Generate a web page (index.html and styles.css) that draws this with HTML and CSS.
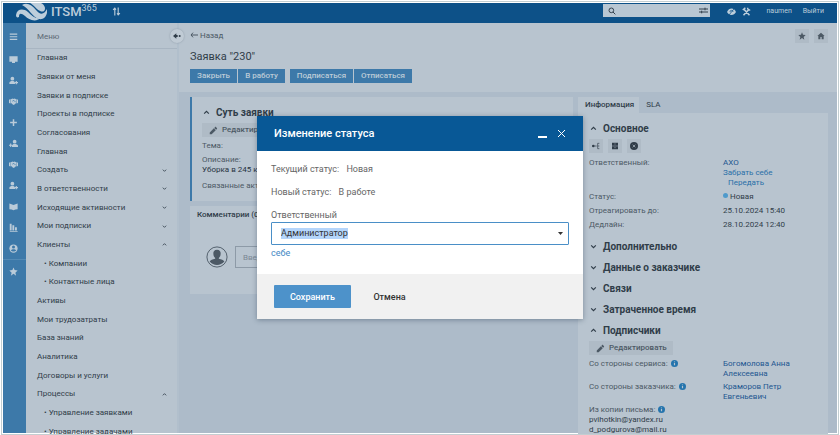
FILE: index.html
```html
<!DOCTYPE html>
<html lang="ru">
<head>
    <meta charset="UTF-8">
    <meta name="viewport" content="width=device-width, initial-scale=1.0">
    <link rel="stylesheet" href="styles.css">
    <title>Заявка "230"</title>
</head>
<body>
    <svg class="sprite" aria-hidden="true">
        <symbol id="user-plus" viewBox="0 0 24 24"><circle cx="9" cy="7" r="5"/><path d="M1 21v-3c0-4 4-5 8-5s7 1 7 5v3zM18 13h3v3h3v3h-3v3h-3v-3h-2v-3h2z"/></symbol>
        <symbol id="plus-user" viewBox="0 0 24 24"><circle cx="15" cy="7" r="5"/><path d="M8 21v-3c0-4 3-5 7-5s9 1 9 5v3zM3 12h3v3h2v3H6v3H3v-3H0v-3h3z"/></symbol>
        <symbol id="hands" viewBox="0 0 24 24"><path d="M0 7l4-2v12l-4-1zM24 7l-4-2v12l4-1zM5 6l5-2 2 1 3-1 4 2v10l-6 5-3-1-5-5z"/><path d="M9 11l4-2 5 5" fill="none" stroke="#3d79a9" stroke-width="2"/></symbol>
        <symbol id="star" viewBox="0 0 24 24"><path d="M12 18l7 5-2-8 6-6-8-1-3-7-3 7-8 1 6 6-2 8z"/></symbol>
        <symbol id="up" viewBox="0 0 24 24"><path d="M4 16l8-8 8 8" fill="none" stroke="currentColor" stroke-width="4"/></symbol>
        <symbol id="down" viewBox="0 0 24 24"><path d="M4 8l8 8 8-8" fill="none" stroke="currentColor" stroke-width="4"/></symbol>
        <symbol id="pencil" viewBox="0 0 24 24"><path d="M2 17v5h5L18 11l-5-5zM21 8c1-1 1-2 0-3L19 3c-1-1-2-1-3 0L14 5l5 5z"/></symbol>
        <symbol id="info" viewBox="0 0 24 24"><circle cx="12" cy="12" r="12"/><path d="M10 10h4v8h-4zM10 5h4v3h-4z" fill="#b8c4cf"/></symbol>
    </svg>

    <div class="frame">
        <header class="topbar">
            <svg class="logo" viewBox="0 0 31 18">
                <path d="M0 12C1 6 7 5 12 9c5 5 9 8 14 5-6 6-13 3-17-1-4-3-6-3-6 1-2 1-3 0-3-2z"/>
                <path d="M6 2C11-1 16 2 20 7c4 5 8 5 11-1 1 6-3 11-8 10C16 14 13 5 6 2z"/>
                <path d="M14 0h11c4 2 5 6 3 8-3 2-7-2-9-4-2-2-3-3-5-4z"/>
            </svg>
            <span class="brand">ITSM<sup>365</sup></span>
            <svg class="sort" viewBox="0 0 16 16"><path d="M5 15V3M2 5l3-3 2 3M11 1v12M9 11l2 3 3-3" fill="none" stroke="currentColor" stroke-width="2"/></svg>
            <label class="search">
                <svg viewBox="0 0 24 24"><path d="M15 15l7 7" stroke="currentColor" stroke-width="3"/><circle cx="10" cy="10" r="7" fill="none" stroke="currentColor" stroke-width="3"/></svg>
                <input type="search" aria-label="Поиск">
                <svg class="tune" viewBox="0 0 27 21"><path d="M0 6h27M0 15h27M18 2v8M8 11v8" stroke="currentColor" stroke-width="3"/></svg>
            </label>
            <svg class="tool" viewBox="0 0 24 24"><path d="M0 13C3 7 7 4 12 4s9 3 12 9c-3 5-7 8-12 8S3 18 0 13z"/><path d="M4 23L21 2M8 13a4 4 0 0 1 8 0" fill="none" stroke="#0d5188" stroke-width="2"/></svg>
            <svg class="tool" viewBox="0 0 24 24"><path d="M4 22L18 7M20 22L6 7M2 8l7-6M15 2c0 4 2 7 7 6" fill="none" stroke="currentColor" stroke-width="4"/></svg>
            <a class="user" href="#">naumen</a>
            <a class="exit" href="#">Выйти</a>
        </header>

        <div class="shell">
            <nav class="rail" aria-label="Разделы">
                <a href="#" aria-label="Меню"><svg viewBox="0 0 24 24"><path d="M2 4h20v3H2zM2 11h20v3H2zM2 18h20v3H2z"/></svg></a>
                <a href="#" aria-label="Главная"><svg viewBox="0 0 24 24"><path d="M1 3h22v15h-7v3H8v-3H1z"/></svg></a>
                <a href="#" aria-label="Заявки"><svg><use href="#user-plus"/></svg></a>
                <a href="#" aria-label="Партнёры"><svg><use href="#hands"/></svg></a>
                <a href="#" aria-label="Создать"><svg viewBox="0 0 24 24"><path d="M10 3h4v7h7v4h-7v7h-4v-7H3v-4h7z"/></svg></a>
                <a href="#" aria-label="Добавить"><svg><use href="#plus-user"/></svg></a>
                <a href="#" aria-label="Договоры"><svg><use href="#hands"/></svg></a>
                <a href="#" aria-label="Клиенты"><svg><use href="#user-plus"/></svg></a>
                <a href="#" aria-label="База знаний"><svg viewBox="0 0 24 24"><path d="M1 4l4 1 7 3 7-3 4-1v15l-6 1-5 2-5-2-6-1z"/></svg></a>
                <a href="#" aria-label="Аналитика"><svg viewBox="0 0 24 24"><path d="M2 2h5v18H2zM9 6h5v14H9zM16 11h5v9h-5zM2 21h21v2H2z"/></svg></a>
                <a href="#" aria-label="Профиль"><svg viewBox="0 0 24 24"><circle cx="12" cy="12" r="11"/><circle cx="12" cy="8" r="4" fill="#3d79a9"/><path d="M5 17c2-4 12-4 14 0-3 4-11 4-14 0z" fill="#3d79a9"/></svg></a>
                <a class="fav" href="#" aria-label="Избранное"><svg><use href="#star"/></svg></a>
            </nav>

            <aside class="menu">
                <div class="menu-title">Меню</div>
                <ul>
                    <li><a href="#">Главная</a></li>
                    <li><a href="#">Заявки от меня</a></li>
                    <li><a href="#">Заявки в подписке</a></li>
                    <li><a href="#">Проекты в подписке</a></li>
                    <li><a href="#">Согласования</a></li>
                    <li><a href="#">Главная</a></li>
                    <li><a href="#">Создать</a><svg><use href="#down"/></svg></li>
                    <li><a href="#">В ответственности</a><svg><use href="#down"/></svg></li>
                    <li><a href="#">Исходящие активности</a><svg><use href="#down"/></svg></li>
                    <li><a href="#">Мои подписки</a><svg><use href="#down"/></svg></li>
                    <li><a href="#">Клиенты</a><svg><use href="#up"/></svg></li>
                    <li class="sub"><a href="#">• Компании</a></li>
                    <li class="sub"><a href="#">• Контактные лица</a></li>
                    <li><a href="#">Активы</a></li>
                    <li><a href="#">Мои трудозатраты</a></li>
                    <li><a href="#">База знаний</a></li>
                    <li><a href="#">Аналитика</a></li>
                    <li><a href="#">Договоры и услуги</a></li>
                    <li><a href="#">Процессы</a><svg><use href="#up"/></svg></li>
                    <li class="sub"><a href="#">• Управление заявками</a></li>
                    <li class="sub"><a href="#">• Управление задачами</a></li>
                </ul>
                <button class="collapse" aria-label="Свернуть меню"><svg viewBox="0 0 24 16"><path d="M0 8l10-8v5h4v6h-4v5z"/><circle cx="20" cy="8" r="3"/></svg></button>
            </aside>

            <main>
                <div class="page-head">
                    <div class="crumbs">
                        <a href="#"><svg viewBox="0 0 24 18"><path d="M24 9H3M9 2L3 9l6 7" fill="none" stroke="currentColor" stroke-width="3"/></svg>Назад</a>
                        <span>
                            <button class="square" aria-label="В избранное"><svg><use href="#star"/></svg></button>
                            <button class="square" aria-label="Домой"><svg viewBox="0 0 24 24"><path d="M12 2l11 10h-3v10h-6v-7h-4v7H4V12H1z"/></svg></button>
                        </span>
                    </div>
                    <h1>Заявка "230"</h1>
                    <div class="actions">
                        <div class="group"><button class="w-close">Закрыть</button><button class="w-close">В работу</button></div>
                        <div class="group"><button class="w-sub">Подписаться</button><button class="w-unsub">Отписаться</button></div>
                    </div>
                </div>

                <div class="columns">
                    <div class="left">
                        <section class="card essence">
                            <h2><svg><use href="#up"/></svg>Суть заявки</h2>
                            <button class="edit"><svg><use href="#pencil"/></svg>Редактировать</button>
                            <p>Тема:</p>
                            <p>Описание:<br><b>Уборка в 245 каб</b></p>
                            <p>Связанные акты</p>
                        </section>
                        <section class="card comments">
                            <h3>Комментарии (0)</h3>
                            <div class="reply">
                                <svg viewBox="0 0 24 24"><circle cx="12" cy="12" r="11" fill="none" stroke="currentColor" stroke-width="1"/><path d="M12 4c3 0 4 2 4 4 0 3-1 4-2 5v1c3 1 5 1 6 3-4 5-12 5-16 0 1-2 3-2 6-3v-1c-1-1-2-2-2-5 0-2 1-4 4-4z"/></svg>
                                <input type="text" placeholder="Введите" aria-label="Комментарий">
                            </div>
                        </section>
                    </div>

                    <div class="right">
                        <div class="tabs"><button class="active">Информация</button><button>SLA</button></div>
                        <section class="panel">
                            <h2><svg><use href="#up"/></svg>Основное</h2>
                            <div class="icons">
                                <button class="square" aria-label="Связи"><svg viewBox="0 0 24 24"><circle cx="4" cy="12" r="4"/><path d="M8 12h6M22 4h-5v16h5M17 12h5" fill="none" stroke="currentColor" stroke-width="2"/></svg></button>
                                <button class="square" aria-label="Архив"><svg viewBox="0 0 24 24"><path d="M3 2h18v9H3zM3 13h18v9H3z"/><path d="M9 6h6M9 17h6" stroke="#b8c4cf" stroke-width="1"/></svg></button>
                                <button class="square" aria-label="Закрыть"><svg viewBox="0 0 24 24"><circle cx="12" cy="12" r="12"/><path d="M8 8l8 8M16 8l-8 8" stroke="#b8c4cf" stroke-width="2"/></svg></button>
                            </div>
                            <dl>
                                <dt>Ответственный:</dt>
                                <dd class="links"><a class="dark" href="#">АХО</a><a href="#">Забрать себе</a><a class="pass" href="#">Передать</a></dd>
                                <dt>Статус:</dt><dd><i class="dot"></i>Новая</dd>
                                <dt>Отреагировать до:</dt><dd>25.10.2024 15:40</dd>
                                <dt>Дедлайн:</dt><dd>28.10.2024 12:40</dd>
                            </dl>
                            <h2><svg><use href="#down"/></svg>Дополнительно</h2>
                            <h2><svg><use href="#down"/></svg>Данные о заказчике</h2>
                            <h2><svg><use href="#down"/></svg>Связи</h2>
                            <h2><svg><use href="#down"/></svg>Затраченное время</h2>
                            <h2><svg><use href="#up"/></svg>Подписчики</h2>
                            <button class="edit"><svg><use href="#pencil"/></svg>Редактировать</button>
                            <dl class="followers">
                                <dt>Со стороны сервиса: <svg><use href="#info"/></svg></dt><dd><a class="dark" href="#">Богомолова Анна Алексеевна</a></dd>
                                <dt>Со стороны заказчика: <svg><use href="#info"/></svg></dt><dd><a class="dark" href="#">Краморов Петр Евгеньевич</a></dd>
                                <dt>Из копии письма: <svg><use href="#info"/></svg><span>pvihotkin@yandex.ru<br>d_podgurova@mail.ru</span></dt>
                            </dl>
                        </section>
                    </div>
                </div>
            </main>
        </div>
    </div>

    <div class="overlay">
        <form class="modal" role="dialog" aria-labelledby="modal-title">
            <div class="modal-head">
                <h2 id="modal-title">Изменение статуса</h2>
                <button type="button" aria-label="Свернуть"><svg viewBox="0 0 10 10"><path d="M1 8h9" stroke="currentColor" stroke-width="2"/></svg></button>
                <button type="button" aria-label="Закрыть окно"><svg viewBox="0 0 10 10"><path d="M1 1l7 7M8 1L1 8" stroke="currentColor" stroke-width="1"/></svg></button>
            </div>
            <div class="modal-body">
                <p>Текущий статус: <span>Новая</span></p>
                <p>Новый статус: <span>В работе</span></p>
                <label for="responsible">Ответственный</label>
                <div class="combo">
                    <select id="responsible"><option>Администратор</option></select>
                    <svg viewBox="0 0 10 6"><path d="M0 0h10L5 6z"/></svg>
                </div>
                <a href="#">себе</a>
            </div>
            <div class="modal-foot">
                <button type="submit" class="save">Сохранить</button>
                <button type="button" class="cancel">Отмена</button>
            </div>
        </form>
    </div>
</body>
</html>
```
FILE: styles.css
```css
* {
    box-sizing: border-box;
}

body {
    margin: 0;
    background: #fff;
    color: #303d49;
    font: 8px/10px Roboto, sans-serif;
}

h1, h2, h3, p, ul, dl, dd {
    margin: 0;
    padding: 0;
}

a {
    color: inherit;
    text-decoration: none;
}

button, input, select {
    font: inherit;
    color: inherit;
    border: none;
    padding: 0;
    background: none;
}

button {
    cursor: pointer;
}

svg {
    fill: currentColor;
    flex: none;
}

.sprite {
    display: none;
}

.frame {
    display: flex;
    flex-direction: column;
    height: calc(100vh - 1px);
    margin: 1px 1px 0;
    border: 1px solid #c3ced1;
    padding: 1px;
    overflow: hidden;
}

/* Top bar */
.topbar {
    display: flex;
    align-items: center;
    flex: none;
    height: 20px;
    padding: 0 13px;
    background: #0d5188;
    color: #bdcedb;
}

.logo {
    width: 31px;
    height: 18px;
    align-self: flex-start;
}

.brand {
    margin-left: 4px;
    font-size: 13px;
    font-weight: 500;
    line-height: 17px;
    align-self: flex-start;
}

.brand sup {
    font-size: 9px;
    font-weight: 400;
    line-height: 8px;
}

.sort {
    width: 9px;
    height: 9px;
    margin: 0 auto 4px 15px;
}

.search {
    display: flex;
    align-items: center;
    width: 107px;
    height: 13px;
    margin: 0 17px 5px 0;
    padding: 0 2px 0 5px;
    background: #b9c7d3;
    color: #35424e;
}

.search svg {
    width: 8px;
    height: 8px;
}

.search input {
    flex: 1;
    min-width: 0;
    outline: none;
}

.search .tune {
    width: 9px;
    height: 7px;
}

.tool {
    width: 9px;
    height: 9px;
    margin: 0 6px 4px 0;
}

.user, .exit {
    margin-bottom: 4px;
    font-size: 7px;
}

.user {
    margin-left: 10px;
    margin-right: 11px;
}

/* Side navigation */
.shell {
    display: flex;
    flex: 1;
    min-height: 0;
}

.rail {
    width: 23px;
    flex: none;
    padding-top: 3px;
    background: #3d79a9;
    color: #bacbd9;
}

.rail a {
    display: flex;
    align-items: center;
    justify-content: center;
    height: 21px;
    padding-right: 3px;
}

.rail a:first-child {
    margin-bottom: 2px;
}

.rail svg {
    width: 9px;
    height: 9px;
}

.rail .fav {
    height: 24px;
    border-top: 1px solid #538ab5;
}

.menu {
    position: relative;
    width: 153px;
    flex: none;
    background: #b8c4cf;
    border-right: 2px solid #b1bfcc;
}

.menu-title {
    height: 26px;
    padding-left: 11px;
    border-bottom: 1px solid #a8b5c2;
    line-height: 28px;
    color: #5b6874;
}

.menu ul {
    display: grid;
    grid-auto-rows: 1fr;
    height: 392px;
    list-style: none;
}

.menu li {
    display: flex;
    align-items: center;
    justify-content: space-between;
    padding: 0 10px 0 11px;
}

.menu .sub {
    padding-left: 18px;
}

.menu li svg {
    width: 5px;
    height: 5px;
}

.collapse {
    position: absolute;
    top: 6px;
    right: -7px;
    display: flex;
    align-items: center;
    justify-content: center;
    width: 14px;
    height: 14px;
    border-radius: 50%;
    background: #c0cbd5;
    box-shadow: 0 0 2px #8d9aa7;
}

.collapse svg {
    width: 8px;
    height: 6px;
}

/* Ticket page */
main {
    display: flex;
    flex-direction: column;
    flex: 1;
    min-width: 0;
    background: #adbbc9;
}

.page-head {
    flex: none;
    height: 69px;
    padding: 6px 9px 0 11px;
    background: #b8c4cf;
}

.crumbs {
    display: flex;
    align-items: center;
    justify-content: space-between;
    color: #4c5965;
}

.crumbs > span {
    display: flex;
    gap: 5px;
}

.crumbs a svg {
    width: 8px;
    height: 6px;
    margin-right: 2px;
}

.square {
    display: flex;
    align-items: center;
    justify-content: center;
    width: 14px;
    height: 14px;
    background: #afbbc6;
}

.square svg {
    width: 8px;
    height: 8px;
}

h1 {
    margin-top: 5px;
    font-size: 11px;
    font-weight: 400;
    line-height: 17px;
}

.actions {
    display: flex;
    gap: 5px;
    margin-top: 4px;
}

.group {
    display: flex;
    gap: 1px;
    color: #bccbd7;
}

.group button {
    height: 14px;
    background: #3d79a9;
    font-weight: 500;
}

.w-close {
    width: 47px;
}

.w-sub {
    width: 63px;
}

.w-unsub {
    width: 58px;
}

.columns {
    display: grid;
    grid-template-columns: 1fr 250px;
    gap: 5px;
    padding: 5px 9px 0 11px;
}

.card, .panel {
    background: #b8c4cf;
}

.essence {
    height: 104px;
    padding: 5px 10px;
    border-left: 2px solid #3d79a9;
}

.columns h2 {
    display: flex;
    align-items: center;
    gap: 6px;
    height: 21px;
    padding-left: 1px;
    font-size: 10px;
    font-weight: 700;
}

.columns h2 svg {
    width: 7px;
    height: 7px;
}

.edit {
    display: flex;
    align-items: center;
    gap: 4px;
    width: 84px;
    height: 14px;
    padding-left: 7px;
    background: #afbbc6;
    color: #4c5965;
    font-weight: 500;
}

.edit svg {
    width: 9px;
    height: 9px;
}

.essence p {
    margin-top: 4px;
    color: #4c5965;
}

.essence p:last-child {
    margin-top: 6px;
}

.essence b {
    color: #26333f;
    font-weight: 400;
}

.comments {
    height: 88px;
    margin-top: 5px;
    padding: 4px 7px;
}

.comments h3 {
    font-size: 8px;
    font-weight: 500;
}

.reply {
    display: flex;
    gap: 7px;
    margin: 26px 0 0 9px;
    color: #4c5965;
}

.reply svg {
    width: 22px;
    height: 22px;
}

.reply input {
    flex: 1;
    height: 22px;
    padding-left: 7px;
    border: 1px solid #8d9aa7;
}

.reply input::placeholder {
    color: #7b8895;
}

/* Right column */
.tabs {
    display: flex;
    height: 16px;
}

.tabs button {
    padding: 0 7px;
}

.tabs .active {
    padding-right: 5px;
    background: #b8c4cf;
    font-weight: 500;
}

.panel {
    height: 400px;
    padding: 5px 11px;
}

.icons {
    display: flex;
    gap: 5px;
}

.panel dl {
    display: grid;
    grid-template-columns: 134px 1fr;
    margin: 3px 0 4px;
}

.panel dt, .panel dd {
    padding: 2px 0;
}

.panel .followers {
    margin-top: 2px;
}

.followers dt, .followers dd {
    padding-bottom: 1px;
}

.panel dt {
    color: #4c5965;
}

.panel dt svg {
    width: 7px;
    height: 7px;
    margin-left: 1px;
    vertical-align: -1px;
    color: #2474ad;
}

.panel dt span {
    display: block;
    color: #303d49;
}

.panel dd {
    max-width: 80px;
}

.panel dd a {
    color: #2a70a8;
}

.panel dd .dark {
    color: #1d5690;
}

.links a {
    display: block;
    width: max-content;
}

.links .pass {
    margin-left: 5px;
}

.dot {
    display: inline-block;
    width: 5px;
    height: 5px;
    margin-right: 2px;
    border-radius: 50%;
    background: #4f9acb;
    vertical-align: 1px;
}

/* Dialog */
.overlay {
    position: absolute;
    top: 0;
    left: 0;
    right: 0;
    display: flex;
    justify-content: center;
    padding-top: 116px;
}

.modal {
    width: 326px;
    background: #fff;
    box-shadow: 0 1px 5px rgba(30, 50, 70, 0.4);
    font-size: 9px;
    color: #666;
}

.modal-head {
    display: flex;
    align-items: center;
    gap: 10px;
    height: 35px;
    padding: 0 16px 0 17px;
    background: #085896;
    color: #fff;
}

.modal-head h2 {
    flex: 1;
    font-size: 11px;
    font-weight: 500;
}

.modal-head button {
    line-height: 0;
}

.modal-head svg {
    width: 10px;
    height: 10px;
}

.modal-body {
    height: 123px;
    padding: 13px 14px 0;
}

.modal-body p {
    margin-bottom: 13px;
}

.modal-body p span {
    margin-left: 5px;
}

.modal-body label {
    display: block;
}

.combo {
    display: flex;
    align-items: center;
    justify-content: space-between;
    height: 23px;
    margin: 2px 0 3px;
    padding: 0 5px 0 9px;
    border: 1px solid #4a8fc7;
    border-radius: 1px;
    color: #333;
}

.combo select {
    appearance: none;
    field-sizing: content;
    height: 11px;
    line-height: 11px;
    background: #b4d5fb;
}

.combo svg {
    width: 5px;
    height: 3px;
}

.modal-body a {
    color: #3f87c4;
}

.modal-foot {
    display: flex;
    height: 45px;
    padding: 11px 17px;
    background: #f1f1f1;
}

.modal-foot button {
    width: 77px;
    height: 23px;
    font-weight: 500;
    color: #333;
}

.modal-foot .save {
    background: #4d92ca;
    border-radius: 1px;
    color: #fff;
}
```
